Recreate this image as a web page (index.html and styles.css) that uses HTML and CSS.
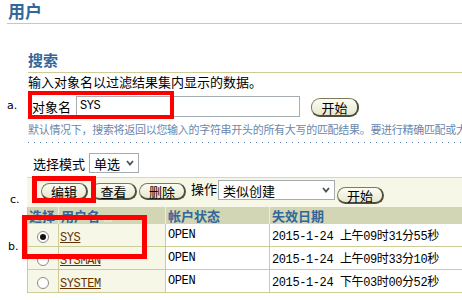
FILE: index.html
```html
<!doctype html>
<html lang="zh-CN">
<head>
  <meta charset="utf-8">
  <title>用户</title>
  <link rel="stylesheet" href="styles.css">
</head>
<body>
  <div class="page">
    <h1 class="page-title">用户</h1>

    <div class="content">
      <h2 class="section-title">搜索</h2>
      <p class="intro">输入对象名以过滤结果集内显示的数据。</p>

      <div class="search-row">
        <label class="field-label">对象名</label>
        <div class="text-field">SYS</div>
        <button class="btn btn-go" type="button">开始</button>
      </div>

      <p class="hint">默认情况下，搜索将返回以您输入的字符串开头的所有大写的匹配结果。要进行精确匹配或大小写匹配</p>
      <div class="dotted"></div>

      <div class="mode-row">
        <span class="mode-label">选择模式</span>
        <div class="select select-mode">
          <span>单选</span>
          <svg width="8" height="6" viewBox="0 0 8 6"><polyline points="1,1 4,4.5 7,1" fill="none" stroke="#505050" stroke-width="1.8"/></svg>
        </div>
      </div>

      <div class="toolbar">
        <button class="btn btn-edit" type="button">编辑</button>
        <button class="btn btn-view" type="button">查看</button>
        <button class="btn btn-del" type="button">删除</button>
        <span class="action-label">操作</span>
        <div class="select select-action">
          <span>类似创建</span>
          <svg width="8" height="6" viewBox="0 0 8 6"><polyline points="1,1 4,4.5 7,1" fill="none" stroke="#505050" stroke-width="1.8"/></svg>
        </div>
        <button class="btn btn-run" type="button">开始</button>
      </div>

      <table class="user-table">
        <colgroup>
          <col class="c-sel">
          <col class="c-name">
          <col class="c-state">
          <col class="c-date">
        </colgroup>
        <thead>
          <tr>
            <th>选择</th>
            <th>用户名 <svg class="sort" width="10" height="8" viewBox="0 0 10 8"><polygon points="5,1 9,7 1,7" fill="none" stroke="#eef0e0" stroke-width="1"/></svg></th>
            <th>帐户状态</th>
            <th>失效日期</th>
          </tr>
        </thead>
        <tbody>
          <tr>
            <td class="cell-sel"><span class="radio checked"></span></td>
            <td class="cell-name"><a href="#">SYS</a></td>
            <td class="mono">OPEN</td>
            <td class="mono">2015-1-24 上午09时31分55秒</td>
          </tr>
          <tr>
            <td class="cell-sel"><span class="radio"></span></td>
            <td class="cell-name"><a href="#">SYSMAN</a></td>
            <td class="mono">OPEN</td>
            <td class="mono">2015-1-24 上午09时33分10秒</td>
          </tr>
          <tr>
            <td class="cell-sel"><span class="radio"></span></td>
            <td class="cell-name"><a href="#">SYSTEM</a></td>
            <td class="mono">OPEN</td>
            <td class="mono">2015-1-24 下午03时00分52秒</td>
          </tr>
        </tbody>
      </table>
    </div>

    <!-- annotation marks -->
    <span class="mark mark-a">a.</span>
    <span class="mark mark-c">c.</span>
    <span class="mark mark-b">b.</span>
    <div class="callout callout-a"></div>
    <div class="callout callout-c"></div>
    <div class="callout callout-b"></div>
  </div>
</body>
</html>
```

FILE: styles.css
```css
body {
  margin: 0;
  background: #ffffff;
  color: #000000;
  font-family: "Noto Sans CJK SC", sans-serif;
  font-size: 13px;
  overflow: hidden;
}
.page {
  position: relative;
  width: 462px;
  height: 300px;
  overflow: hidden;
}
.page-title {
  margin: 0 0 0 7px;
  padding: 1px 0 2px 1px;
  font-size: 17px;
  line-height: 20px;
  font-weight: bold;
  color: #336699;
  border-bottom: 1px solid #cccc99;
}
.content {
  margin-left: 28px;
}
.section-title {
  margin: 27px 0 0 0;
  padding: 0 0 3px 0;
  font-size: 15px;
  line-height: 18px;
  font-weight: bold;
  color: #336699;
  border-bottom: 1px solid #cccc99;
}
.intro {
  margin: 1px 0 0 0;
  line-height: 15px;
}

/* search row */
.search-row {
  display: flex;
  align-items: flex-end;
  margin-top: 7px;
  height: 21px;
}
.field-label {
  margin: 0 5px 3px 4px;
  line-height: 15px;
}
.text-field {
  box-sizing: border-box;
  width: 224px;
  height: 21px;
  padding-left: 3px;
  border: 1px solid #a5acb2;
  font: 12px/19px "Liberation Mono", monospace;
  letter-spacing: -0.5px;
}
.btn {
  box-sizing: border-box;
  height: 17px;
  padding: 0;
  border: 1px solid #7b7b5b;
  border-right: 2px solid #4f4f3f;
  border-bottom: 2px solid #4f4f3f;
  border-radius: 9px;
  background: linear-gradient(#fcfcf4, #e8e8d0);
  color: #000000;
  font-family: "Noto Sans CJK SC", sans-serif;
  font-size: 13px;
  line-height: 13px;
}
.btn-go {
  width: 48px;
  height: 19px;
  margin-left: 11px;
}

.hint {
  margin: 6px 0 0 0;
  font-size: 11px;
  line-height: 13px;
  letter-spacing: -0.3px;
  color: #6a87ac;
  white-space: nowrap;
}
.dotted {
  height: 1px;
  margin-top: 6px;
  background: repeating-linear-gradient(90deg, #5b7fae 0, #5b7fae 1px, transparent 1px, transparent 6px);
}

/* selection mode */
.mode-row {
  display: flex;
  align-items: center;
  margin-top: 10px;
  padding-left: 5px;
}
.mode-label {
  line-height: 15px;
  margin-right: 4px;
}
.select {
  box-sizing: border-box;
  display: flex;
  align-items: center;
  justify-content: space-between;
  height: 20px;
  padding: 0 4px 0 4px;
  border: 1px solid #a5acb2;
  background: #ffffff;
  line-height: 15px;
}
.select-mode {
  width: 50px;
}
.select-action {
  width: 117px;
  margin-top: 2px;
  margin-left: 1px;
}

/* toolbar */
.toolbar {
  display: flex;
  align-items: flex-start;
  height: 29px;
  margin: 4px 0 0 -1px;
  padding-left: 14px;
  background: #f7f7e7;
  border-top: 1px solid #d8d8b8;
}
.toolbar .btn {
  margin-top: 5px;
}
.btn-edit {
  width: 47px;
}
.btn-view {
  width: 46px;
  margin-left: 3px;
}
.btn-del {
  width: 47px;
  margin-left: 2px;
}
.action-label {
  margin: 3px 0 0 5px;
  line-height: 15px;
}
.toolbar .btn-run {
  width: 47px;
  margin: 9px 0 0 2px;
}

/* table */
.user-table {
  margin-left: -1px;
  border-collapse: collapse;
  table-layout: fixed;
  width: 470px;
}
.c-sel { width: 31px; }
.c-name { width: 107px; }
.c-state { width: 104px; }
.user-table th {
  height: 17px;
  padding: 0 0 0 2px;
  background: #d2d6b4;
  color: #336699;
  font-weight: bold;
  text-align: left;
  line-height: 17px;
  white-space: nowrap;
  border-left: 1px solid #eceedd;
}
.user-table th:first-child {
  padding-left: 1px;
  border-left: 1px solid #cccc99;
}
.sort {
  vertical-align: -1px;
}
.user-table td {
  height: 22px;
  padding: 0 0 0 2px;
  border: 1px solid #cccc99;
  border-top: none;
  white-space: nowrap;
  background: #ffffff;
}
.user-table td.cell-sel {
  padding: 0;
  text-align: center;
  background: #f7f7e7;
}
.user-table td.cell-name {
  padding-left: 1px;
  background: #f7f7e7;
}
.cell-name a {
  color: #663300;
  font: 12px "Liberation Mono", monospace;
  letter-spacing: -0.4px;
}
.mono {
  font-family: "Liberation Mono", "Noto Sans CJK SC", monospace;
  font-size: 12px;
  letter-spacing: -0.4px;
}
.radio {
  display: inline-block;
  position: relative;
  box-sizing: border-box;
  width: 12px;
  height: 12px;
  border: 1px solid #8a8a8a;
  border-radius: 50%;
  background: #ffffff;
  vertical-align: middle;
}
.radio.checked::after {
  content: "";
  position: absolute;
  left: 2px;
  top: 2px;
  width: 6px;
  height: 6px;
  border-radius: 50%;
  background: #111111;
}

/* annotations over the page */
.mark {
  position: absolute;
  font: 11px/13px "DejaVu Sans", sans-serif;
  color: #000000;
}
.mark-a { left: 7px; top: 99px; }
.mark-c { left: 10px; top: 193px; }
.mark-b { left: 8px; top: 240px; }
.callout {
  position: absolute;
  box-sizing: border-box;
  border: 5px solid #ff0000;
}
.callout-a {
  left: 28px;
  top: 91px;
  width: 146px;
  height: 28px;
  border-width: 4px;
}
.callout-c {
  left: 32px;
  top: 176px;
  width: 64px;
  height: 27px;
}
.callout-b {
  left: 22px;
  top: 215px;
  width: 125px;
  height: 44px;
}
```
